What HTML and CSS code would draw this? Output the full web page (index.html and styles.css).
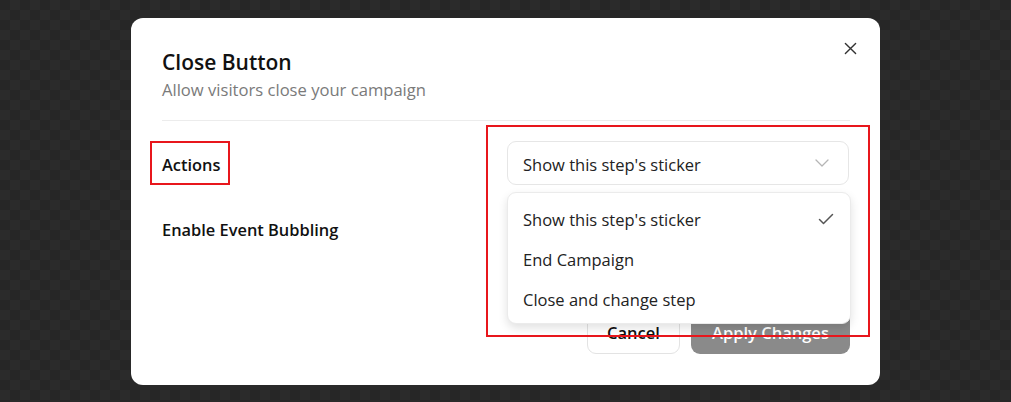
FILE: index.html
```html
<!DOCTYPE html>
<html>
<head>
<meta charset="utf-8">
<link rel="stylesheet" href="styles.css">
</head>
<body>
<div class="modal">
  <button class="close" aria-label="Close">
    <svg width="14" height="14" viewBox="0 0 14 14"><path d="M1.5 1.5 L12.5 12.5 M12.5 1.5 L1.5 12.5" stroke="#333" stroke-width="1.5" stroke-linecap="round" fill="none"/></svg>
  </button>
  <header class="head">
    <h1 class="title">Close Button</h1>
    <p class="subtitle">Allow visitors close your campaign</p>
  </header>
  <div class="divider"></div>
  <div class="form">
    <div class="row">
      <div class="label">Actions<span class="mark mark-label"></span></div>
      <div class="control">
        <div class="select">
          <span>Show this step's sticker</span>
          <svg class="chev" width="14" height="8" viewBox="0 0 14 8"><path d="M1 1 L7 7 L13 1" stroke="#b5b5b5" stroke-width="1.3" fill="none" stroke-linecap="round" stroke-linejoin="round"/></svg>
        </div>
        <ul class="menu">
          <li class="item">Show this step's sticker
            <svg width="16" height="12" viewBox="0 0 16 12"><path d="M1.5 6.5 L5.5 10.5 L14.5 1.5" stroke="#555" stroke-width="1.5" fill="none" stroke-linecap="round" stroke-linejoin="round"/></svg>
          </li>
          <li class="item">End Campaign</li>
          <li class="item">Close and change step</li>
        </ul>
        <span class="mark mark-control"></span>
      </div>
    </div>
    <div class="row">
      <div class="label">Enable Event Bubbling</div>
      <div class="control"></div>
    </div>
  </div>
  <footer class="foot">
    <button class="btn btn-cancel">Cancel</button>
    <button class="btn btn-apply">Apply Changes</button>
  </footer>
</div>
</body>
</html>
```
FILE: styles.css
```css
* { box-sizing: border-box; }
html, body { margin: 0; padding: 0; }
body {
  width: 1011px;
  height: 402px;
  overflow: hidden;
  font-family: "Open Sans", "Noto Sans", sans-serif;
  color: #111;
  background-color: #282828;
  background-image: repeating-conic-gradient(#2b2b2b 0 25%, #262626 0 50%);
  background-size: 20px 20px;
  padding-top: 18px;
  padding-left: 131px;
}
.modal {
  position: relative;
  width: 749px;
  height: 367px;
  background: #fff;
  border-radius: 12px;
  padding: 29px 30px 31px 31px;
  display: flex;
  flex-direction: column;
}
.close {
  position: absolute;
  top: 17px;
  right: 17px;
  width: 26px;
  height: 26px;
  padding: 0;
  border: 0;
  background: none;
  display: flex;
  align-items: center;
  justify-content: center;
}
.close svg { width: 13px; height: 13px; }
.title {
  margin: 0;
  font-size: 21px;
  line-height: 30px;
  font-weight: 600;
  color: #111;
}
.subtitle {
  margin: 0;
  font-size: 16.6px;
  line-height: 25px;
  color: #7a7a7a;
}
.divider {
  height: 1px;
  background: #ececec;
  margin-top: 18px;
}
.form {
  margin-top: 20px;
  display: flex;
  flex-direction: column;
  gap: 21px;
}
.row {
  display: grid;
  grid-template-columns: 345px 342px;
  height: 44px;
  align-items: center;
}
.label {
  position: relative;
  font-size: 16.4px;
  font-weight: 600;
  color: #111;
  align-self: stretch;
  display: flex;
  align-items: center;
  padding-top: 3px;
}
.control {
  position: relative;
  height: 44px;
}
.select {
  height: 44px;
  border: 1px solid #e6e6e6;
  border-radius: 9px;
  display: flex;
  align-items: center;
  justify-content: space-between;
  padding: 3px 19px 0 15px;
  font-size: 16.5px;
  color: #222;
}
.chev { margin-top: -3px; }
.menu {
  position: absolute;
  top: 51px;
  left: 0;
  width: 344px;
  margin: 0;
  padding: 6px 0 4px;
  list-style: none;
  background: #fff;
  border: 1px solid #ebebeb;
  border-radius: 9px;
  box-shadow: 0 4px 10px rgba(0,0,0,0.12);
  z-index: 5;
}
.item {
  height: 40px;
  display: flex;
  align-items: center;
  justify-content: space-between;
  padding: 0 16px 0 15px;
  font-size: 16.5px;
  color: #222;
}
.mark {
  position: absolute;
  border: 2px solid #e8161c;
  pointer-events: none;
  z-index: 6;
}
.mark-label {
  left: -12px;
  top: 0;
  width: 80px;
  height: 44px;
}
.mark-control {
  left: -21px;
  top: -16px;
  width: 384px;
  height: 212px;
}
.foot {
  margin-top: auto;
  display: flex;
  justify-content: flex-end;
  gap: 11px;
}
.btn {
  height: 44px;
  border-radius: 9px;
  font-family: inherit;
  font-size: 16.5px;
  font-weight: 600;
  padding: 0;
}
.btn-cancel {
  width: 93px;
  background: #fff;
  border: 1px solid #e3e3e3;
  color: #111;
}
.btn-apply {
  width: 159px;
  background: #8a8a8a;
  border: 0;
  color: #fff;
}
```
